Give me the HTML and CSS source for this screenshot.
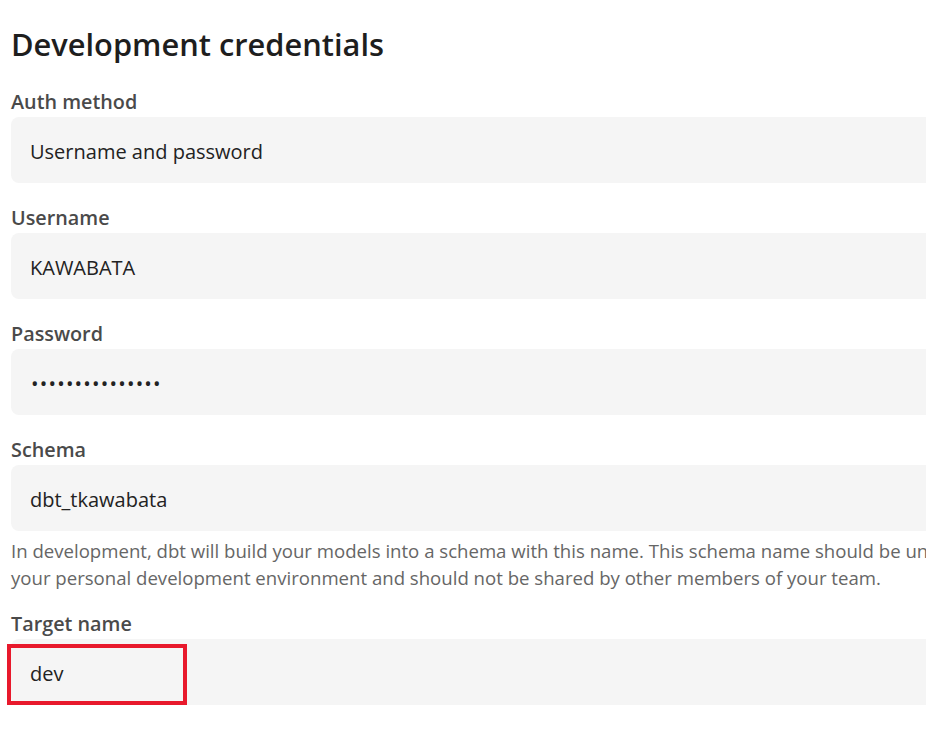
FILE: index.html
```html
<!DOCTYPE html>
<html lang="en">
<head>
<meta charset="utf-8">
<title>Development credentials</title>
<link rel="stylesheet" href="styles.css">
</head>
<body>
<main class="page">
  <h1 class="title">Development credentials</h1>
  <div class="field">
    <div class="label">Auth method</div>
    <div class="box">Username and password</div>
  </div>
  <div class="field">
    <div class="label">Username</div>
    <div class="box">KAWABATA</div>
  </div>
  <div class="field">
    <div class="label">Password</div>
    <div class="box dots">•••••••••••••••</div>
  </div>
  <div class="field">
    <div class="label">Schema</div>
    <div class="box">dbt_tkawabata</div>
    <p class="help">In development, dbt will build your models into a schema with this name. This schema name should be unique to<br>your personal development environment and should not be shared by other members of your team.</p>
  </div>
  <div class="field target">
    <div class="label">Target name</div>
    <div class="box">dev</div>
    <div class="highlight"></div>
  </div>
</main>
</body>
</html>
```
FILE: styles.css
```css
html, body {
  margin: 0;
  padding: 0;
  background: #ffffff;
  overflow: hidden;
}
.page {
  width: 1100px;
  padding: 24px 0 0 11px;
  font-family: "Open Sans", "Noto Sans", sans-serif;
  color: #222222;
}
.title {
  margin: 0;
  font-size: 30.8px;
  line-height: 40px;
  font-weight: 600;
  color: #1e1e1e;
}
.field {
  position: relative;
  margin-top: 20px;
}
.field:first-of-type {
  margin-top: 23px;
}
.label {
  font-size: 19.8px;
  line-height: 28px;
  padding-top: 1px;
  font-weight: 600;
  color: #4a4a4a;
  margin-bottom: 1px;
}
.box {
  height: 66px;
  box-sizing: border-box;
  background: #f5f5f5;
  border-radius: 8px;
  padding: 3px 0 0 19px;
  font-size: 20px;
  line-height: 63px;
  color: #222222;
  white-space: nowrap;
}
.dots {
  letter-spacing: 1.2px;
  padding-left: 20px;
}
.help {
  margin: 6px 0 0 0;
  font-size: 18.6px;
  line-height: 27px;
  color: #666666;
  white-space: nowrap;
}
.target {
  margin-top: 18px;
}
.highlight {
  position: absolute;
  left: -4px;
  top: 35px;
  width: 172px;
  height: 53px;
  border: 4px solid #e8192c;
}
```
